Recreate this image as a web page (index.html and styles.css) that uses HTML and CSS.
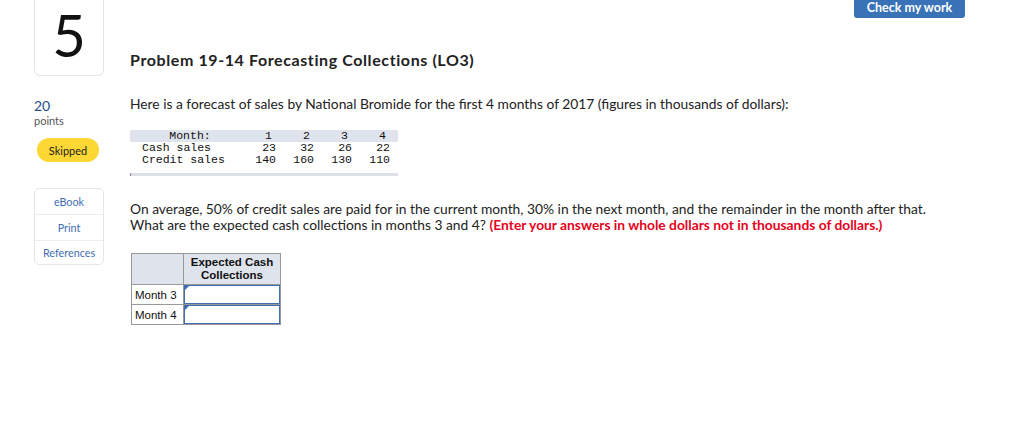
FILE: index.html
```html
<!DOCTYPE html>
<html>
<head>
<meta charset="utf-8">
<link rel="stylesheet" href="styles.css">
</head>
<body>
<div class="page">
  <aside class="side">
    <div class="qnum"><span class="qnum-t">5</span></div>
    <div class="pts">
      <div class="pts-n">20</div>
      <div class="pts-l">points</div>
    </div>
    <div class="status">Skipped</div>
    <nav class="tools">
      <a class="tool">eBook</a>
      <a class="tool">Print</a>
      <a class="tool">References</a>
    </nav>
  </aside>
  <main class="main">
    <div class="topbar"><button class="check">Check my work</button></div>
    <h1 class="title">Problem 19-14 Forecasting Collections (LO3)</h1>
    <p class="intro">Here is a forecast of sales by National Bromide for the first 4 months of 2017 (figures in thousands of dollars):</p>
    <table class="data">
      <colgroup><col class="c-lbl"><col class="c-n"><col class="c-n"><col class="c-n"><col class="c-n"></colgroup>
      <tr class="hd"><td class="lbl c">Month:</td><td>1</td><td>2</td><td>3</td><td>4</td></tr>
      <tr><td class="lbl">Cash sales</td><td>23</td><td>32</td><td>26</td><td>22</td></tr>
      <tr><td class="lbl">Credit sales</td><td>140</td><td>160</td><td>130</td><td>110</td></tr>
    </table>
    <div class="scroll"></div>
    <div class="q">
      <div class="q-line">On average, 50% of credit sales are paid for in the current month, 30% in the next month, and the remainder in the month after that.</div>
      <div class="q-line"><span>What are the expected cash collections in months 3 and 4?</span> <span class="warn">(Enter your answers in whole dollars not in thousands of dollars.)</span></div>
    </div>
    <table class="ans">
      <tr><th class="blank"></th><th class="head">Expected Cash Collections</th></tr>
      <tr><td class="rl">Month 3</td><td class="inp"><div class="box"></div></td></tr>
      <tr><td class="rl">Month 4</td><td class="inp"><div class="box"></div></td></tr>
    </table>
  </main>
</div>
</body>
</html>
```
FILE: styles.css
```css
html, body { margin: 0; padding: 0; background: #fff; }
body { font-family: Lato, "Open Sans", sans-serif; color: #222; }
.page { display: flex; padding-left: 34px; padding-right: 59px; }
.side { width: 70px; flex: none; display: flex; flex-direction: column; }
.qnum {
  height: 76px; box-sizing: border-box;
  border: 1px solid #e6e6e6; border-top: none; border-radius: 0 0 6px 6px;
  display: flex; align-items: flex-start; justify-content: center;
}
.qnum-t {
  display: block;
  font-size: 58px; font-weight: 400; color: #111; line-height: normal;
}
.pts { margin-top: 22px; }
.pts-n { font-size: 14px; line-height: 16px; color: #1f4e8c; }
.pts-l { font-size: 11px; line-height: 13px; color: #555; }
.status {
  margin: 11px 0 0 3px; width: 62px; height: 24px; border-radius: 12px;
  background: #fdd835; display: flex; align-items: center; justify-content: center;
  font-size: 11px; color: #222;
}
.tools {
  margin-top: 26px; border: 1px solid #e6e6e6; border-radius: 5px;
  display: flex; flex-direction: column;
}
.tool {
  height: 25px; display: flex; align-items: center; justify-content: center;
  font-size: 10.8px; color: #3f6db0; border-top: 1px solid #ececec;
}
.tool:first-child { border-top: none; }
.tool:last-child { height: 23px; }
.main { flex: 1; margin-left: 26px; }
.topbar { display: flex; justify-content: flex-end; height: 18px; }
.check {
  width: 111px; height: 18px; border: none; border-radius: 0 0 3px 3px;
  background: #3a72b8; color: #fff; font-family: Lato, sans-serif; font-weight: 700;
  font-size: 12.5px; padding: 0 0 4px; line-height: 13px;
}
.title { margin: 32px 0 0; font-size: 16px; line-height: 20px; font-weight: 700; color: #222; letter-spacing: 0.6px; }
.intro { margin: 26px 0 0; font-size: 13.8px; line-height: 16px; }
.data {
  margin-top: 18px; border-collapse: collapse; width: 268px; table-layout: fixed;
  font-family: "Liberation Mono", monospace; font-size: 11.5px; color: #111;
}
.c-lbl { width: 116px; }
.c-n { width: 38px; }
.data td { padding: 0 8px 0 0; height: 12px; line-height: 12px; text-align: right; white-space: nowrap; }
.data td.lbl { text-align: left; padding-left: 12px; }
.data td.lbl.c { text-align: center; }
.data .hd { background: #dfe3ec; }
.data .hd td { padding-right: 12px; }
.data .hd td.lbl { padding-right: 0; padding-left: 4px; }
.scroll { width: 267px; height: 3px; margin-top: 7px; background: #dcdfe5; border-left: 1px solid #888; }
.q { margin: 25px 0 0; font-size: 13.8px; line-height: 16px; display: flex; flex-direction: column; }
.q-line { white-space: nowrap; }
.warn { color: #e8001c; font-weight: 700; }
.ans {
  margin: 20px 0 0 1px; border-collapse: collapse;
  font-family: "Liberation Sans", Arial, sans-serif; font-size: 11.5px; color: #111;
}
.ans th, .ans td { border: 1px solid #999; padding: 0; }
.ans th { background: #dfe3ec; height: 30px; }
.ans .blank { width: 51px; }
.ans .head { width: 96px; line-height: 13px; font-weight: 700; text-align: center; }
.ans .rl { height: 19px; padding-left: 3px; text-align: left; }
.ans .inp { padding: 0; }
.box { height: 17px; border: 1px solid #3f6fb0; background: #fff; position: relative; }
.box::before {
  content: ""; position: absolute; left: 0; top: 0;
  border-top: 4px solid #3f6fb0; border-right: 4px solid transparent;
}
```
